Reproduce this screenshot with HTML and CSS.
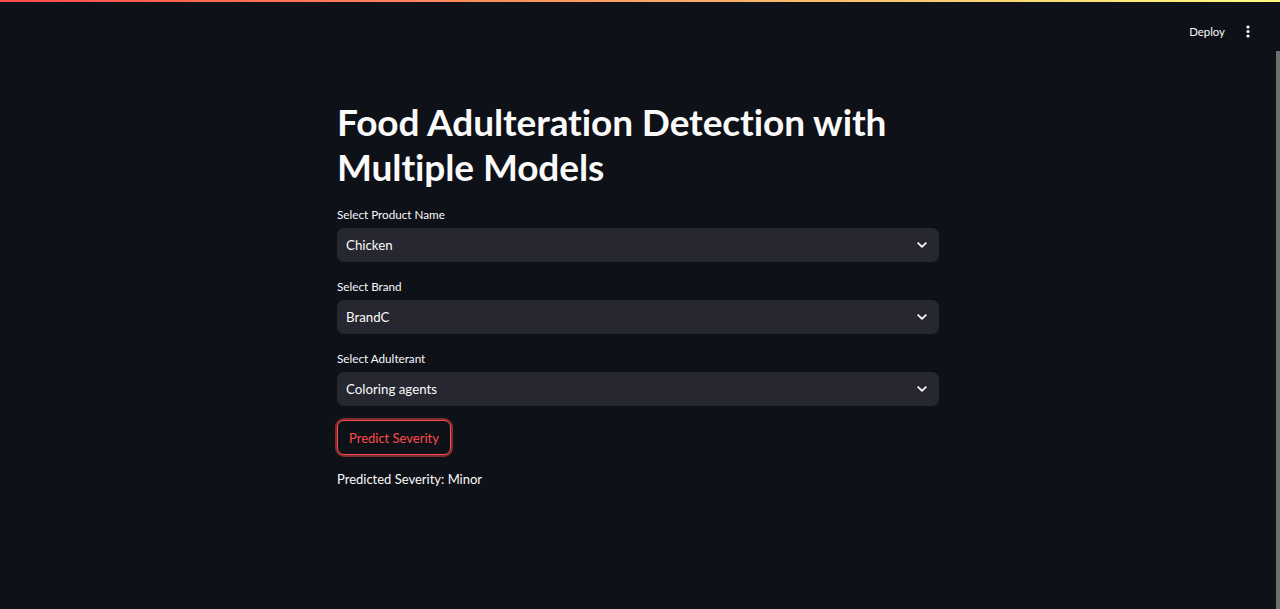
FILE: index.html
```html
<!DOCTYPE html>
<html lang="en">
<head>
<meta charset="utf-8">
<title>Food Adulteration Detection</title>
<link rel="stylesheet" href="styles.css">
</head>
<body>
<div class="decoration"></div>
<header class="topbar">
  <span class="deploy">Deploy</span>
  <span class="kebab" aria-label="menu">
    <svg width="4" height="13" viewBox="0 0 4 13"><circle cx="2" cy="2" r="1.6" fill="#fafafa"/><circle cx="2" cy="6.5" r="1.6" fill="#fafafa"/><circle cx="2" cy="11" r="1.6" fill="#fafafa"/></svg>
  </span>
</header>
<main class="app">
  <div class="block">
    <h1 class="title">Food Adulteration Detection with Multiple Models</h1>

    <div class="field">
      <label class="label">Select Product Name</label>
      <div class="select"><span>Chicken</span>
        <svg class="chev" width="10" height="6" viewBox="0 0 10 6"><path d="M1.2 1.2 L5 4.8 L8.8 1.2" fill="none" stroke="#fafafa" stroke-width="1.8" stroke-linecap="round" stroke-linejoin="round"/></svg>
      </div>
    </div>

    <div class="field">
      <label class="label">Select Brand</label>
      <div class="select"><span>BrandC</span>
        <svg class="chev" width="10" height="6" viewBox="0 0 10 6"><path d="M1.2 1.2 L5 4.8 L8.8 1.2" fill="none" stroke="#fafafa" stroke-width="1.8" stroke-linecap="round" stroke-linejoin="round"/></svg>
      </div>
    </div>

    <div class="field">
      <label class="label">Select Adulterant</label>
      <div class="select"><span>Coloring agents</span>
        <svg class="chev" width="10" height="6" viewBox="0 0 10 6"><path d="M1.2 1.2 L5 4.8 L8.8 1.2" fill="none" stroke="#fafafa" stroke-width="1.8" stroke-linecap="round" stroke-linejoin="round"/></svg>
      </div>
    </div>

    <button class="btn">Predict Severity</button>

    <p class="result">Predicted Severity: Minor</p>
  </div>
</main>
<div class="scrollbar"></div>
</body>
</html>
```

FILE: styles.css
```css
html, body {
  margin: 0;
  padding: 0;
  height: 100%;
}
body {
  background: #0e1117;
  color: #fafafa;
  font-family: Lato, "Source Sans Pro", "Noto Sans", sans-serif;
  overflow: hidden;
}
.decoration {
  height: 2px;
  background: linear-gradient(90deg, #ff4b4b, #fffd80);
}
.topbar {
  height: 49px;
  display: flex;
  align-items: center;
  justify-content: flex-end;
  padding-right: 30px;
  gap: 21px;
}
.deploy {
  font-size: 11.4px;
  color: #fafafa;
  padding-top: 10px;
}
.kebab {
  display: flex;
  padding-top: 10px;
}
.app {
  padding-right: 4px;
}
.block {
  width: 602px;
  margin: 0 auto;
  display: flex;
  flex-direction: column;
  align-items: flex-start;
  padding-top: 48px;
}
.title {
  margin: 0 0 1px;
  font-size: 37px;
  line-height: 45px;
  font-weight: 700;
  letter-spacing: -0.1px;
}
.field {
  width: 100%;
  display: flex;
  flex-direction: column;
  margin-top: 15px;
}
.label {
  font-size: 11.7px;
  line-height: 18px;
  margin-bottom: 5px;
}
.select {
  height: 34px;
  background: #262730;
  border-radius: 7px;
  display: flex;
  align-items: center;
  justify-content: space-between;
  padding: 0 12px 0 9px;
  font-size: 13.3px;
}
.chev {
  display: block;
}
.btn {
  margin-top: 14px;
  height: 35px;
  padding: 0 11px;
  background: #0e1117;
  color: #ff4b4b;
  border: 1px solid #ff4b4b;
  border-radius: 7px;
  box-shadow: 0 0 0 2px rgba(255, 75, 75, 0.45);
  font-family: inherit;
  font-size: 13px;
}
.result {
  margin: 13px 0 0;
  font-size: 13px;
  line-height: 22px;
}
.scrollbar {
  position: absolute;
  right: 0;
  top: 51px;
  bottom: 0;
  width: 4px;
  background: #6e6e6e;
}
```
